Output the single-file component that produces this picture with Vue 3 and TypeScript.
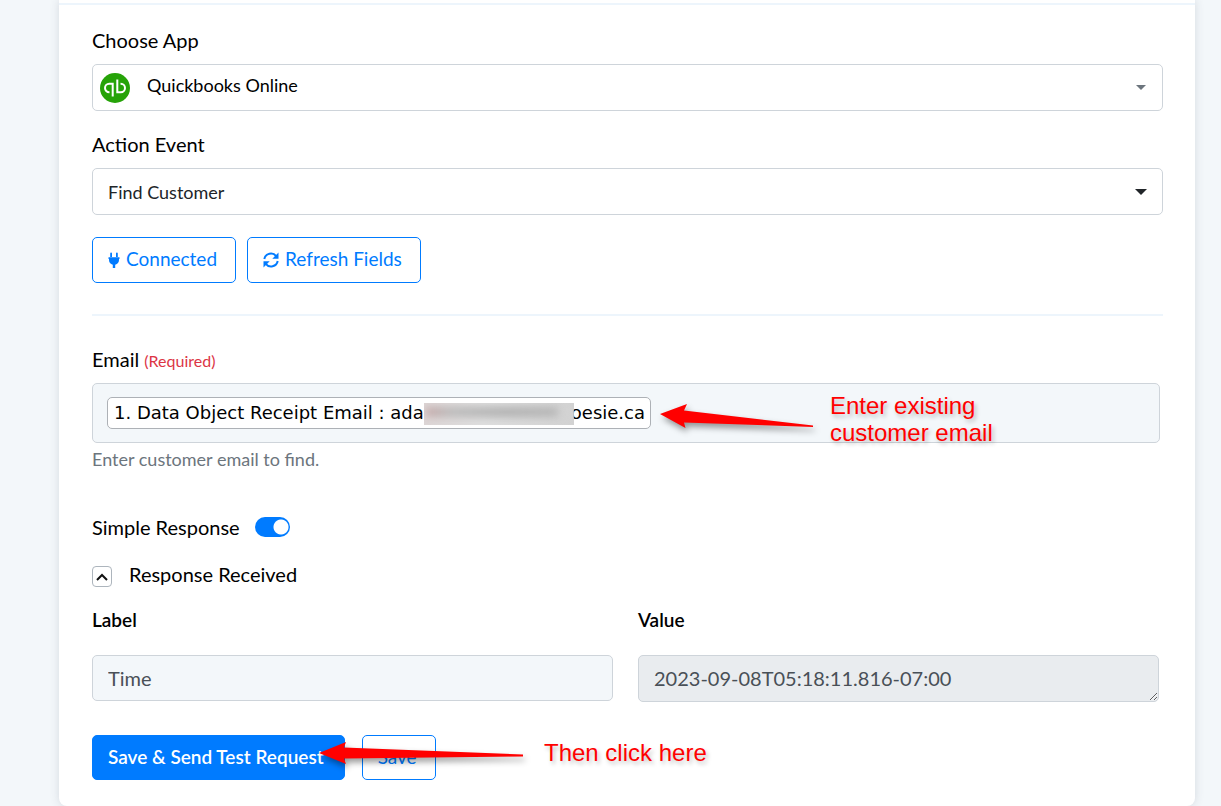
<script setup lang="ts">
import { ref } from 'vue'

const app = ref('Quickbooks Online')
const actionEvent = ref('Find Customer')
const emailDraft = ref('')
const simpleResponse = ref(true)
const responseOpen = ref(true)
const responseLabel = ref('Time')
const responseValue = ref('2023-09-08T05:18:11.816-07:00')
</script>

<template>
  <main class="page">
    <form class="card" @submit.prevent>
      <div class="card-head"></div>
      <div class="card-body">
        <label class="label" for="app">Choose App</label>
        <div class="select-wrap">
          <svg class="logo" viewBox="0 0 30 30" aria-hidden="true">
            <circle cx="15" cy="15" r="15" fill="#26a308" />
            <g fill="none" stroke="#fff" stroke-width="2">
              <path d="M9.500 19.200H9.200a4.200 4.200 0 0 1 0-8.400h3.500V23.500" />
              <path d="M20.500 10.800h.3a4.200 4.200 0 0 1 0 8.400h-3.500V6.500" />
            </g>
          </svg>
          <select id="app" v-model="app" class="control with-logo">
            <option>Quickbooks Online</option>
          </select>
          <svg class="caret muted" viewBox="0 0 10 5" aria-hidden="true"><path d="M0 0h10L5 5z" /></svg>
        </div>

        <label class="label next" for="event">Action Event</label>
        <div class="select-wrap">
          <select id="event" v-model="actionEvent" class="control">
            <option>Find Customer</option>
          </select>
          <svg class="caret" viewBox="0 0 12 6" aria-hidden="true"><path d="M0 0h12L6 6z" /></svg>
        </div>

        <div class="buttons">
          <button type="button" class="btn outline">
            <svg class="plug" viewBox="0 0 12 16" aria-hidden="true">
              <path d="M2.200 1.500a.9.9 0 0 1 1.800 0V5H2.200zM8 1.500a.9.9 0 0 1 1.800 0V5H8zM.5 5.300h11v1.600H11V8a5 5 0 0 1-3.800 4.700V16H4.800v-3.300A5 5 0 0 1 1 8V6.900H.5z" />
            </svg>
            Connected
          </button>
          <button type="button" class="btn outline">
            <svg class="sync" viewBox="0 0 16 16" aria-hidden="true">
              <g fill="none" stroke="currentColor" stroke-width="2">
                <path d="M1.300 7A6.700 6.700 0 0 1 13.200 4.200" />
                <path d="M14.700 9A6.700 6.700 0 0 1 2.800 11.800" />
              </g>
              <path d="M15.500.5v6.200H9.300zM.5 15.500V9.300h6.200z" />
            </svg>
            Refresh Fields
          </button>
        </div>

        <hr class="rule" />

        <label class="label" for="email">Email <span class="required">(Required)</span></label>
        <div class="tag-field">
          <span class="tag">1. Data Object Receipt Email : ada<span class="redacted" aria-hidden="true"><i></i></span><span class="tail">oesie.ca</span></span>
          <input id="email" v-model="emailDraft" class="tag-input" type="text" />
          <svg class="arrow arrow-email" viewBox="0 0 154 24" aria-hidden="true">
            <path d="M0 10 27 0 24 6.500 153 21.500V23L24 18.500 25.500 24z" />
          </svg>
          <p class="note note-email">Enter existing<br />customer email</p>
        </div>
        <p class="help">Enter customer email to find.</p>

        <div class="switch-row">
          <label for="simple">Simple Response</label>
          <input id="simple" v-model="simpleResponse" class="switch" type="checkbox" role="switch" />
        </div>

        <div class="toggle-row">
          <button id="toggle" type="button" class="toggle" :aria-expanded="responseOpen" @click="responseOpen = !responseOpen">
            <svg viewBox="0 0 12 8" aria-hidden="true"><path d="M1 7 6 2l5 5" /></svg>
          </button>
          <label for="toggle">Response Received</label>
        </div>

        <div v-if="responseOpen" class="response">
          <div class="column">
            <label class="heading" for="res-label">Label</label>
            <input id="res-label" v-model="responseLabel" class="control tinted" type="text" />
          </div>
          <div class="column">
            <label class="heading" for="res-value">Value</label>
            <textarea id="res-value" v-model="responseValue" class="control area" rows="1" readonly></textarea>
          </div>
        </div>

        <div class="actions">
          <button type="submit" class="btn primary">Save &amp; Send Test Request</button>
          <button type="button" class="btn outline">Save</button>
          <svg class="arrow arrow-save" viewBox="0 0 205 22" aria-hidden="true">
            <path d="M0 11 27 0 25 5.500 204 12.500V14.500L25 16.500 27 22z" />
          </svg>
          <p class="note note-save">Then click here</p>
        </div>
      </div>
    </form>
  </main>
</template>

<style>
body {
  margin: 0;
  background: #f3f7fa;
}
</style>

<style scoped>
* {
  box-sizing: border-box;
}
.page {
  padding: 0 26px 0 59px;
  font-family: Lato, "Liberation Sans", sans-serif;
  font-size: 20px;
  line-height: 27px;
  color: #000;
}
.card {
  background: #fff;
  border-radius: 0 0 8px 8px;
  box-shadow: 0 0 10px rgba(60, 70, 90, 0.16);
}
.card-head {
  height: 5px;
  border-bottom: 2px solid #edf5fc;
}
.card-body {
  padding: 22px 32px 26px 33px;
}
.label {
  display: block;
  margin-bottom: 10px;
}
.label.next {
  margin-top: 20px;
}
.required {
  font-size: 16px;
  line-height: 16px;
  color: #dc3545;
}
.select-wrap {
  position: relative;
}
.control {
  display: block;
  width: 100%;
  height: 47px;
  margin: 0;
  padding: 0 15px;
  border: 1px solid #ced4da;
  border-radius: 5px;
  background: #fff;
  appearance: none;
  font: inherit;
  color: #212529;
}
select.control {
  padding-top: 2px;
  font-size: 18px;
}
select.with-logo {
  padding: 0 54px 4px;
  color: #000;
}
.logo {
  position: absolute;
  left: 8px;
  top: 9px;
  width: 30px;
  height: 30px;
}
.caret {
  position: absolute;
  right: 16px;
  top: 21px;
  width: 12px;
  height: 6px;
  fill: #212529;
}
.caret.muted {
  right: 17px;
  width: 10px;
  height: 5px;
  fill: #6c757d;
}
.buttons {
  display: flex;
  gap: 11px;
  margin-top: 22px;
}
.btn {
  display: flex;
  align-items: center;
  height: 46px;
  margin: 0;
  padding: 0 18px 3px 15px;
  border: 1px solid #007bff;
  border-radius: 5px;
  font: inherit;
  font-size: 19px;
  white-space: nowrap;
}
.btn svg {
  margin-top: 3px;
  fill: currentColor;
}
.outline {
  background: #fff;
  color: #007bff;
}
.primary {
  padding-right: 20px;
  background: #007bff;
  color: #fff;
  font-weight: 600;
}
.plug {
  width: 12px;
  height: 16px;
  margin-right: 6px;
}
.sync {
  width: 16px;
  height: 16px;
  margin-right: 6px;
}
.rule {
  height: 2px;
  margin: 31px 0 30px;
  border: 0;
  background: #edf5fc;
}
.tag-field {
  position: relative;
  display: flex;
  align-items: center;
  height: 60px;
  margin-right: 3px;
  padding: 0 14px;
  border: 1px solid #ced4da;
  border-radius: 5px;
  background: #f3f7fa;
}
.tag {
  display: flex;
  align-items: center;
  height: 32px;
  padding: 0 5px 1px 6px;
  border: 1px solid #adb1b6;
  border-radius: 5px;
  background: #fff;
  font-family: "DejaVu Sans", sans-serif;
  font-size: 18px;
  white-space: pre;
}
.redacted {
  width: 150px;
  height: 22px;
  margin-top: 3px;
  overflow: hidden;
  background: linear-gradient(90deg, #ddd6d6, #dedede 40%, #d2d2d2);
}
.redacted i {
  display: block;
  height: 8px;
  margin: 5px 16px 0 2px;
  background: linear-gradient(90deg, #c0a0a0, #b4b4b4 20%, #a8a8a8 60%, #b0b0b0);
  filter: blur(4px);
}
.tail {
  margin-left: -3px;
  clip-path: inset(0 0 0 3px);
}
.tag-input {
  flex: 1;
  min-width: 0;
  height: 32px;
  border: 0;
  background: transparent;
  font: inherit;
}
.help {
  margin: 3px 0 0;
  font-size: 18px;
  color: #6c757d;
}
.switch-row {
  display: flex;
  align-items: center;
  gap: 15px;
  margin-top: 41px;
}
.switch {
  width: 35px;
  height: 20px;
  margin: 0 0 2px;
  border-radius: 10px;
  appearance: none;
  background: radial-gradient(circle at 26px 10px, #fff 7px, transparent 8px) #007bff;
}
.toggle-row {
  display: flex;
  align-items: center;
  gap: 17px;
  margin-top: 20px;
}
.toggle {
  display: flex;
  align-items: center;
  justify-content: center;
  width: 20px;
  height: 21px;
  margin-top: 4px;
  padding: 0;
  border: 1px solid #adb5bd;
  border-radius: 4px;
  background: #fff;
}
.toggle svg {
  width: 12px;
  height: 8px;
  fill: none;
  stroke: #111;
  stroke-width: 2;
}
.response {
  display: grid;
  grid-template-columns: 1fr 1fr;
  gap: 25px;
  margin: 18px 4px 0 0;
}
.heading {
  display: block;
  margin-bottom: 22px;
  font-size: 19px;
  font-weight: 600;
}
.tinted {
  height: 46px;
  padding-bottom: 1px;
  background: #f3f7fa;
  color: #495057;
}
.area {
  padding-top: 9px;
  background: #e9ecef;
  color: #495057;
  overflow: hidden;
  resize: vertical;
}
.actions {
  position: relative;
  display: flex;
  gap: 17px;
  margin-top: 33px;
}
.actions .btn {
  height: 45px;
}
.arrow {
  position: absolute;
  fill: #f00;
  overflow: visible;
  filter: drop-shadow(2px 4px 3px rgba(0, 0, 0, 0.4));
  pointer-events: none;
}
.arrow-email {
  left: 567px;
  top: 20px;
  width: 154px;
  height: 24px;
}
.arrow-save {
  left: 227px;
  top: 7px;
  width: 205px;
  height: 22px;
}
.note {
  position: absolute;
  margin: 0;
  font-family: "Liberation Sans", Arial, sans-serif;
  font-size: 24px;
  line-height: 27px;
  color: #f00;
  text-shadow: 2px 3px 4px rgba(0, 0, 0, 0.25);
  white-space: nowrap;
}
.note-email {
  left: 737px;
  top: 8px;
}
.note-save {
  left: 452px;
  top: 4px;
}
</style>
